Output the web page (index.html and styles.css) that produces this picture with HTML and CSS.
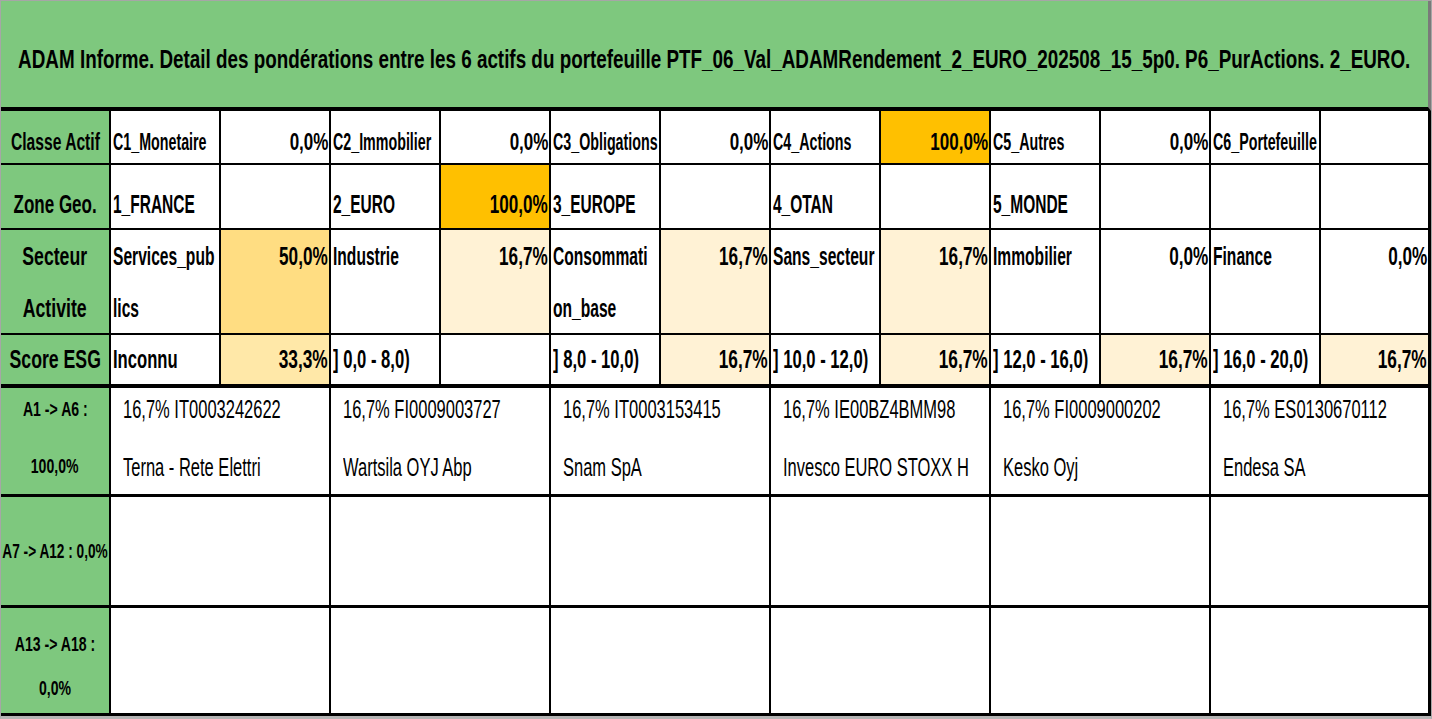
FILE: index.html
```html
<!DOCTYPE html>
<html lang="fr">
<head>
<meta charset="utf-8">
<title>ADAM Informe</title>
<link rel="stylesheet" href="styles.css">
</head>
<body>
<div class="sheet">
  <div class="title"><span class="t">ADAM Informe. Detail des pondérations entre les 6 actifs du portefeuille PTF_06_Val_ADAMRendement_2_EURO_202508_15_5p0. P6_PurActions. 2_EURO.</span></div>
  <div class="grid">
    <div class="row r1">
      <div class="c lab"><span class="t">Classe Actif</span></div>
      <div class="c"><span class="t">C1_Monetaire</span></div><div class="c num"><span class="t">0,0%</span></div>
      <div class="c"><span class="t">C2_Immobilier</span></div><div class="c num"><span class="t">0,0%</span></div>
      <div class="c"><span class="t">C3_Obligations</span></div><div class="c num"><span class="t">0,0%</span></div>
      <div class="c"><span class="t">C4_Actions</span></div><div class="c num or"><span class="t">100,0%</span></div>
      <div class="c"><span class="t">C5_Autres</span></div><div class="c num"><span class="t">0,0%</span></div>
      <div class="c"><span class="t">C6_Portefeuille</span></div><div class="c num"></div>
    </div>
    <div class="row r2">
      <div class="c lab"><span class="t">Zone Geo.</span></div>
      <div class="c"><span class="t">1_FRANCE</span></div><div class="c num"></div>
      <div class="c"><span class="t">2_EURO</span></div><div class="c num or"><span class="t">100,0%</span></div>
      <div class="c"><span class="t">3_EUROPE</span></div><div class="c num"></div>
      <div class="c"><span class="t">4_OTAN</span></div><div class="c num"></div>
      <div class="c"><span class="t">5_MONDE</span></div><div class="c num"></div>
      <div class="c"></div><div class="c num"></div>
    </div>
    <div class="row r3">
      <div class="c lab"><span class="t">Secteur<br>Activite</span></div>
      <div class="c"><span class="t">Services_pub<br>lics</span></div><div class="c num p50"><span class="t">50,0%</span></div>
      <div class="c"><span class="t">Industrie</span></div><div class="c num p17"><span class="t">16,7%</span></div>
      <div class="c"><span class="t">Consommati<br>on_base</span></div><div class="c num p17"><span class="t">16,7%</span></div>
      <div class="c"><span class="t">Sans_secteur</span></div><div class="c num p17"><span class="t">16,7%</span></div>
      <div class="c"><span class="t">Immobilier</span></div><div class="c num"><span class="t">0,0%</span></div>
      <div class="c"><span class="t">Finance</span></div><div class="c num"><span class="t">0,0%</span></div>
    </div>
    <div class="row r4">
      <div class="c lab"><span class="t">Score ESG</span></div>
      <div class="c"><span class="t">Inconnu</span></div><div class="c num p33"><span class="t">33,3%</span></div>
      <div class="c"><span class="t">] 0,0 - 8,0)</span></div><div class="c num"></div>
      <div class="c"><span class="t">] 8,0 - 10,0)</span></div><div class="c num p17"><span class="t">16,7%</span></div>
      <div class="c"><span class="t">] 10,0 - 12,0)</span></div><div class="c num p17"><span class="t">16,7%</span></div>
      <div class="c"><span class="t">] 12,0 - 16,0)</span></div><div class="c num p17"><span class="t">16,7%</span></div>
      <div class="c"><span class="t">] 16,0 - 20,0)</span></div><div class="c num p17"><span class="t">16,7%</span></div>
    </div>
    <div class="row r5">
      <div class="c lab alab"><span class="t">A1 -&gt; A6 :</span><span class="t">100,0%</span></div>
      <div class="c asset"><span class="t">16,7% IT0003242622</span><span class="t">Terna - Rete Elettri</span></div>
      <div class="c asset"><span class="t">16,7% FI0009003727</span><span class="t">Wartsila OYJ Abp</span></div>
      <div class="c asset"><span class="t">16,7% IT0003153415</span><span class="t">Snam SpA</span></div>
      <div class="c asset"><span class="t">16,7% IE00BZ4BMM98</span><span class="t">Invesco EURO STOXX H</span></div>
      <div class="c asset"><span class="t">16,7% FI0009000202</span><span class="t">Kesko Oyj</span></div>
      <div class="c asset"><span class="t">16,7% ES0130670112</span><span class="t">Endesa SA</span></div>
    </div>
    <div class="row r6">
      <div class="c lab alab"><span class="t">A7 -&gt; A12 : 0,0%</span></div>
      <div class="c asset"></div>
      <div class="c asset"></div>
      <div class="c asset"></div>
      <div class="c asset"></div>
      <div class="c asset"></div>
      <div class="c asset"></div>
    </div>
    <div class="row r7">
      <div class="c lab alab"><span class="t">A13 -&gt; A18 :</span><span class="t">0,0%</span></div>
      <div class="c asset"></div>
      <div class="c asset"></div>
      <div class="c asset"></div>
      <div class="c asset"></div>
      <div class="c asset"></div>
      <div class="c asset"></div>
    </div>
  </div>
</div>
</body>
</html>
```
FILE: styles.css
```css
html, body {
  margin: 0;
  padding: 0;
  background: #ffffff;
}

body {
  font-family: "Liberation Sans", Arial, sans-serif;
  color: #000;
}

.t {
  display: inline-block;
  white-space: nowrap;
  transform: scaleX(var(--sx, 0.65));
  transform-origin: left center;
}

.sheet {
  width: 1430px;
  border-top: 1px solid #a6a6a6;
  border-left: 1px solid #a6a6a6;
  border-right: 1px solid #a6a6a6;
  border-bottom: 3px solid #b4b4b4;
}

.title {
  box-sizing: border-box;
  height: 110px;
  background: #7ec87e;
  border-bottom: 4px solid #000;
  border-right: 3px solid #7a7a7a;
  display: flex;
  align-items: center;
  justify-content: center;
  padding-top: 10px;
  font-size: 25px;
  font-weight: bold;
  white-space: nowrap;
  overflow: hidden;
}

.title .t {
  --sx: 0.754;
  transform-origin: center center;
}

.grid {
  display: grid;
  grid-template-columns: repeat(13, 110px);
  grid-template-rows: 54px 65px 105px 53px 109px 111px 108px;
}

.row {
  display: contents;
}

.c {
  box-sizing: border-box;
  border-right: 2px solid #000;
  border-bottom: 2px solid #000;
  background: #fff;
  padding: 0 0 0 2px;
  font-weight: bold;
  white-space: nowrap;
  overflow: hidden;
  display: flex;
}

.row .c:last-child {
  border-right-width: 3px;
}

.num {
  justify-content: flex-end;
  padding: 0 1px 0 0;
}

.num .t {
  transform-origin: right center;
}

.lab {
  background: #7ec87e;
  justify-content: center;
  text-align: center;
  font-size: 25px;
  padding: 0;
}

.lab .t {
  --sx: 0.68;
  transform-origin: center center;
}

.or { background: #ffc000; }
.p50 { background: #ffdd82; }
.p33 { background: #ffe8a8; }
.p17 { background: #fff2d5; }

.r1 .c {
  align-items: flex-end;
  line-height: 41px;
  font-size: 23px;
  --sx: 0.62;
}

.r1 .num { --sx: 0.74; }

.r2 .c {
  align-items: flex-end;
  line-height: 48px;
  font-size: 25px;
  --sx: 0.62;
}

.r2 .num { --sx: 0.684; }

.r3 .c {
  align-items: flex-start;
  line-height: 52px;
  font-size: 26px;
  --sx: 0.6;
}

.r3 .num { --sx: 0.66; }

.r4 .c {
  align-items: center;
  line-height: 49px;
  font-size: 26px;
  border-bottom-width: 4px;
  --sx: 0.64;
}

.r4 .num { --sx: 0.665; }

.r5 .c,
.r6 .c,
.r7 .c {
  border-bottom-width: 3px;
}

.asset {
  grid-column: span 2;
  flex-direction: column;
  align-items: flex-start;
  gap: 28px;
  padding: 6px 0 0 12px;
  font-weight: normal;
  font-size: 25px;
  line-height: 30px;
  --sx: 0.66;
}

.alab {
  flex-direction: column;
  align-items: center;
  justify-content: flex-start;
  font-size: 21px;
  line-height: 30px;
}

.alab .t {
  --sx: 0.67;
}

.r5 .alab {
  padding-top: 6px;
  gap: 27px;
}

.r6 .alab {
  justify-content: center;
}

.r6 .alab .t {
  --sx: 0.65;
}

.r7 .alab {
  padding-top: 21px;
  gap: 14px;
}
```
